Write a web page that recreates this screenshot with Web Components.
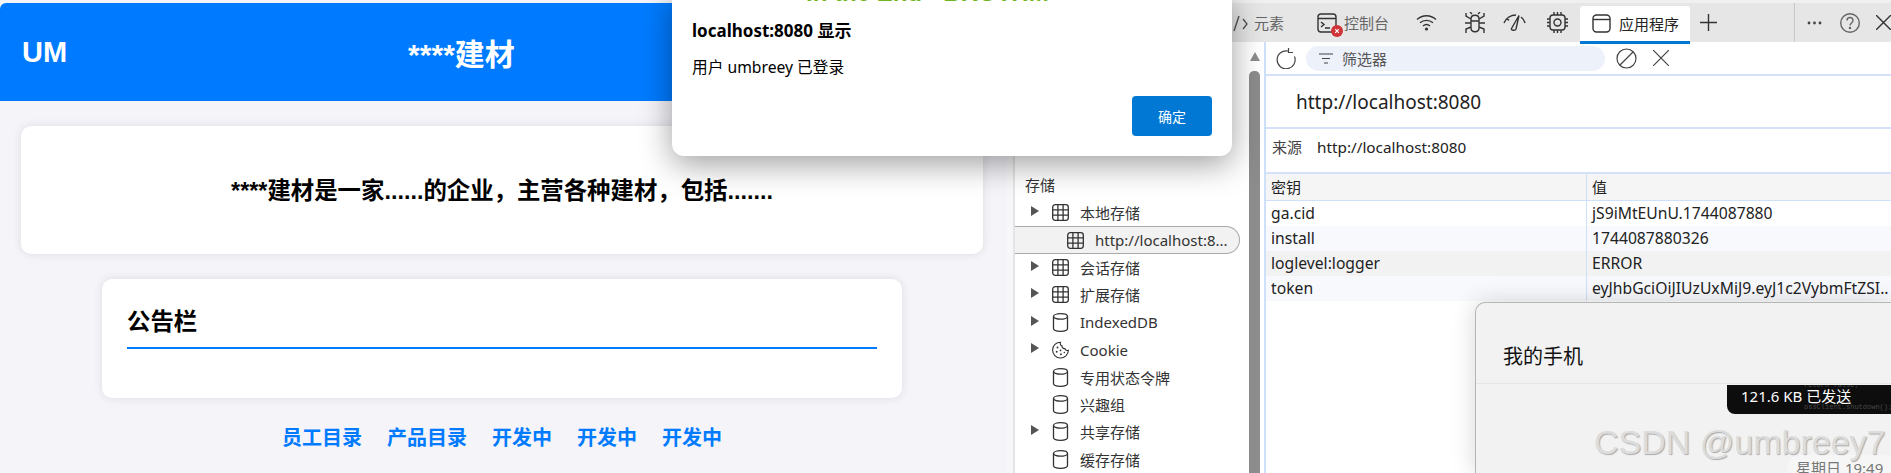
<!DOCTYPE html>
<html lang="zh">
<head>
<meta charset="utf-8">
<title>umbreey</title>
<style>
	html, body { margin: 0; height: 100%; overflow: hidden; background: #fff; }
	body { font-family: "Noto Sans", "Noto Sans CJK SC", sans-serif; }
</style>
</head>
<body>
<app-root></app-root>
<script>
const CJK = '"Noto Sans", "Noto Sans CJK SC", sans-serif';
const ICONS = {
	grid: { w: 17, h: 17, d: '<rect x=".7" y=".7" width="15.600" height="15.600" rx="2.500"/><path d="M.7 5.900h15.600M.7 11.100h15.600M5.900 .7v15.600M11.100 .7v15.600"/>' },
	db: { w: 17, h: 19, d: '<ellipse cx="8.500" cy="3.400" rx="7" ry="2.700"/><path d="M1.500 3.400v12.200c0 1.500 3.100 2.700 7 2.700s7-1.200 7-2.700V3.400"/>' },
	cookie: { w: 20, h: 20, d: '<path d="M10 .8a9.300 9.300 0 1 0 9.300 9.600c-1.900.6-3.600-.3-4.100-2.100-2 .3-3.500-1-3.400-3.100C10.300 5.200 9.300 2.800 10 .8z"/><g fill="#333" stroke="none"><circle cx="6.500" cy="7" r="1.100"/><circle cx="5.500" cy="12" r="1.100"/><circle cx="10" cy="10.500" r="1"/><circle cx="10.500" cy="15" r="1.100"/><circle cx="14.500" cy="13" r=".9"/></g>' }
};

class DtIcon extends HTMLElement {
	connectedCallback() {
		const icon = ICONS[this.getAttribute("name")];
		this.attachShadow({ mode: "open" });
		this.shadowRoot.innerHTML = `
			<style>
				:host { display: inline-flex; flex: none; }
				svg { fill: none; stroke: #333; stroke-width: 1.300; display: block; }
			</style>
			<svg width="${icon.w}" height="${icon.h}" viewBox="0 0 ${icon.w} ${icon.h}">${icon.d}</svg>`;
	}
}
customElements.define("dt-icon", DtIcon);

class ShopPage extends HTMLElement {
	constructor() {
		super();
		this.attachShadow({ mode: "open" });
		this.shadowRoot.innerHTML = `
			<style>
				:host {
					display: block;
					width: 1007px;
					height: 473px;
					box-sizing: border-box;
					padding: 3px 3px 0 0;
					background: #f4f4f9;
					font-family: "Liberation Sans", "Noto Sans CJK SC", sans-serif;
					color: #000;
				}
				header {
					height: 98px;
					background: #007bff;
					color: #fff;
					font-weight: bold;
					display: flex;
					align-items: center;
					padding: 0 22px;
					border-radius: 6px 0 0 0;
					margin-right: -3px;
				}
				.logo { font-size: 29px; }
				.title { font-size: 30px; margin-left: 341px; }
				.intro {
					margin: 25px 21px 0;
					height: 128px;
					padding-bottom: 2px;
					box-sizing: border-box;
					background: #fff;
					border-radius: 10px;
					box-shadow: 0 0 10px rgba(0,0,0,.1);
					display: flex;
					align-items: center;
					justify-content: center;
					font-size: 23.400px;
					font-weight: bold;
				}
				.notice {
					margin: 25px 102px 0 102px;
					height: 119px;
					box-sizing: border-box;
					padding: 24px 25px 0;
					background: #fff;
					border-radius: 10px;
					box-shadow: 0 0 10px rgba(0,0,0,.1);
				}
				.notice h2 {
					margin: 0;
					font-size: 23.400px;
					line-height: 38px;
					padding-bottom: 6px;
					border-bottom: 2px solid #007bff;
				}
				nav {
					margin-top: 24px;
					display: flex;
					justify-content: center;
					gap: 25px;
					font-size: 20px;
					font-weight: bold;
					color: #007bff;
				}
			</style>
			<header><span class="logo">UM</span><span class="title">****建材</span></header>
			<div class="intro">****建材是一家......的企业，主营各种建材，包括.......</div>
			<div class="notice"><h2>公告栏</h2></div>
			<nav><span>员工目录</span><span>产品目录</span><span>开发中</span><span>开发中</span><span>开发中</span></nav>`;
	}
}
customElements.define("shop-page", ShopPage);

class TreeRow extends HTMLElement {
	connectedCallback() {
		const arrow = this.hasAttribute("arrow");
		const sel = this.hasAttribute("selected");
		const icon = this.getAttribute("icon");
		this.attachShadow({ mode: "open" });
		this.shadowRoot.innerHTML = `
			<style>
				:host {
					display: flex;
					align-items: center;
					height: 27.400px;
					box-sizing: border-box;
					font-size: 15px;
					color: #333;
					white-space: nowrap;
					padding-left: ${sel ? 52 : 16}px;
					width: 225px;
				}
				:host([selected]) {
					background: #f2f2f2;
					border: 1px solid #a8a8a8;
					border-left: 0;
					border-radius: 0 14px 14px 0;
				}
				.arrow { width: 0; height: 0; border-left: 8px solid #555; border-top: 5px solid transparent; border-bottom: 5px solid transparent; flex: none; margin-top: -3px; }
				.none { width: 8px; flex: none; }
				.gap { width: 13px; flex: none; }
				.text { margin-left: 11px; }
				dt-icon { width: 17px; justify-content: center; }
			</style>
			${sel ? "" : (arrow ? '<span class="arrow"></span>' : '<span class="none"></span>')}
			${sel ? "" : '<span class="gap"></span>'}
			<dt-icon name="${icon}"></dt-icon>
			<span class="text"><slot></slot></span>`;
	}
}
customElements.define("tree-row", TreeRow);

class StorageTree extends HTMLElement {
	constructor() {
		super();
		this.attachShadow({ mode: "open" });
		this.shadowRoot.innerHTML = `
			<style>
				:host {
					display: flex;
					flex-direction: column;
					width: 234px;
					padding-top: 131px;
					box-sizing: border-box;
					background: #fff;
				}
				.label { font-size: 15px; color: #333; padding-left: 10px; line-height: 24px; height: 26px; }
			</style>
			<div class="label">存储</div>
			<slot></slot>`;
	}
}
customElements.define("storage-tree", StorageTree);

class DtScrollbar extends HTMLElement {
	constructor() {
		super();
		this.attachShadow({ mode: "open" });
		this.shadowRoot.innerHTML = `
			<style>
				:host { display: flex; flex-direction: column; align-items: center; width: 11px; padding-top: 10px; box-sizing: border-box; }
				.up { width: 0; height: 0; border-left: 5.500px solid transparent; border-right: 5.500px solid transparent; border-bottom: 9px solid #8c8c8c; }
				.thumb { flex: 1; width: 11px; margin-top: 10px; background: #8c8c8c; border-radius: 5px 5px 0 0; }
			</style>
			<div class="up"></div><div class="thumb"></div>`;
	}
}
customElements.define("dt-scrollbar", DtScrollbar);

class DtTabs extends HTMLElement {
	constructor() {
		super();
		this.attachShadow({ mode: "open" });
		this.shadowRoot.innerHTML = `
			<style>
				:host {
					display: block;
					height: 42px;
					box-sizing: border-box;
					border-top: 3px solid #f0f0f0;
					background: #e6e6e6;
					font-size: 15px;
					color: #666;
				}
				.bar { display: flex; align-items: center; height: 39px; position: relative; }
				.item { display: flex; align-items: center; flex: none; white-space: nowrap; }
				svg { display: block; fill: none; stroke: #333; stroke-width: 1.400; flex: none; }
				.active {
					background: #fff;
					color: #222;
					height: 38px;
					align-self: flex-start;
					box-sizing: border-box;
					border-bottom: 3px solid #0078d4;
					border-radius: 3px 3px 0 0;
					margin-top: 3px;
				}
			</style>
			<div class="bar">
				<span class="item" style="margin-left:218px;width:15px">
					<svg width="15" height="20" viewBox="0 0 15 20" style="stroke:#555"><path d="M6 3L1 18M10 6l4 5-4 5"/></svg>
				</span>
				<span class="item" style="margin-left:6px">元素</span>
				<span class="item" style="margin-left:33px;position:relative">
					<svg width="20" height="20" viewBox="0 0 20 20"><rect x="1" y="1" width="18" height="18" rx="3"/><path d="M1 5.500h18M4 9l3 2.500L4 14M8 15h5"/></svg>
					<svg width="12" height="12" viewBox="0 0 12 12" style="position:absolute;left:14px;top:12px;stroke:none"><circle cx="6" cy="6" r="6" fill="#d13438"/><path d="M4.200 4.200l3.600 3.600M7.800 4.200L4.200 7.800" stroke="#fff" stroke-width="1.200"/></svg>
				</span>
				<span class="item" style="margin-left:7px">控制台</span>
				<span class="item" style="margin-left:27px">
					<svg width="21" height="17" viewBox="0 0 21 17"><path d="M1 5.500C6.500 .5 14.500 .5 20 5.500M4 8.800c3.800-3.300 9.200-3.300 13 0M7 12c2.100-1.800 4.900-1.800 7 0"/><circle cx="10.500" cy="15" r="1.600" fill="#333" stroke="none"/></svg>
				</span>
				<span class="item" style="margin-left:27px">
					<svg width="22" height="21" viewBox="0 0 22 21"><path d="M7 7c0-5 8-5 8 0v9c0 5-8 5-8 0zM7 9h8M8 2L6 0M14 2l2-2M7 7L2 4V1M15 7l5-3V1M7 11H1M15 11h6M7 15l-5 2v4M15 15l5 2v4"/></svg>
				</span>
				<span class="item" style="margin-left:17px">
					<svg width="23" height="17" viewBox="0 0 23 17"><path d="M1 9C3 4 8 1 13 1M4 4.500l2 2M18 3c2 1.500 3.500 4 4 6M8.500 14.500L16 1.500 13 15c-.8 2-5.300 1.500-4.500-.5z"/></svg>
				</span>
				<span class="item" style="margin-left:21px">
					<svg width="21" height="21" viewBox="0 0 21 21"><rect x="3" y="3" width="15" height="15" rx="3"/><circle cx="10.500" cy="10.500" r="3.500"/><path d="M7 0v3M10.500 0v3M14 0v3M7 18v3M10.500 18v3M14 18v3M0 7h3M0 10.500h3M0 14h3M18 7h3M18 10.500h3M18 14h3"/></svg>
				</span>
				<span class="item active" style="margin-left:12px;width:110px;padding-left:12px">
					<svg width="19" height="19" viewBox="0 0 19 19"><rect x="1" y="1" width="17" height="17" rx="3.500"/><path d="M1 5.500h17"/></svg>
					<span style="margin-left:8px">应用程序</span>
				</span>
				<span class="item" style="margin-left:10px">
					<svg width="17" height="17" viewBox="0 0 17 17"><path d="M8.500 0v17M0 8.500h17"/></svg>
				</span>
				<span class="item" style="margin-left:77px;width:1px;height:39px;background:#c8c8c8"></span>
				<span class="item" style="margin-left:12px">
					<svg width="15" height="4" viewBox="0 0 15 4" style="stroke:none;fill:#444"><circle cx="2" cy="2" r="1.400"/><circle cx="7.500" cy="2" r="1.400"/><circle cx="13" cy="2" r="1.400"/></svg>
				</span>
				<span class="item" style="margin-left:18px">
					<svg width="20" height="20" viewBox="0 0 20 20" style="stroke:#666"><circle cx="10" cy="10" r="9.300"/><path d="M7 7.500c0-4 6-4 6 0 0 2.500-3 2.500-3 5"/><circle cx="10" cy="15" r=".6"/></svg>
				</span>
				<span class="item" style="margin-left:16px">
					<svg width="15" height="15" viewBox="0 0 15 15"><path d="M0 0l15 15M15 0L0 15"/></svg>
				</span>
			</div>`;
	}
}
customElements.define("dt-tabs", DtTabs);

class StorageView extends HTMLElement {
	constructor() {
		super();
		this.attachShadow({ mode: "open" });
		this.shadowRoot.innerHTML = `
			<style>
				:host {
					display: block;
					flex: 1;
					min-width: 0;
					border-left: 2px solid #cfe0fa;
					font-size: 15px;
					color: #222;
					background: #fff;
				}
				.tools { height: 32px; display: flex; align-items: center; border-bottom: 2px solid #d3e2fa; }
				svg { display: block; fill: none; stroke: #444; stroke-width: 1.200; flex: none; }
				.pill {
					width: 299px;
					height: 25px;
					margin-left: 10px;
					background: #edf1fa;
					border-radius: 13px;
					display: flex;
					align-items: center;
					color: #555;
					box-sizing: border-box;
					padding-left: 13px;
				}
				.pill span { margin-left: 9px; }
				.origin { height: 53px; display: flex; align-items: center; padding-left: 30px; box-sizing: border-box; font-size: 19px; border-bottom: 2px solid #d3e2fa; }
				.src { height: 45px; display: flex; align-items: center; padding: 0 0 8px 6px; box-sizing: border-box; border-bottom: 2px solid #d3e2fa; font-size: 15.300px; }
				.src b { font-weight: normal; font-size: 15px; color: #444; margin-right: 15px; }
				.grid { display: grid; grid-template-columns: 320px 1fr; font-size: 15.700px; }
				.c { height: 25px; line-height: 25px; padding-left: 5px; white-space: nowrap; overflow: hidden; }
				.c:nth-child(even) { border-left: 1px solid #cfe0fa; }
				.h { height: 26px; line-height: 27px; background: #f5f5f5; border-bottom: 1px solid #cfe0fa; font-size: 15px; }
				.alt { background: #f7f9fd; }
				.cur { background: #f2f2f2; }
			</style>
			<div class="tools">
				<svg style="margin-left:8px" width="22" height="21" viewBox="0 0 22 21"><path d="M14 3a9 9 0 1 0 6.500 5.500M14.500 0v4.500H19"/></svg>
				<div class="pill">
					<svg width="14" height="11" viewBox="0 0 14 11"><path d="M0 1h14M3 5.500h8M5 10h4"/></svg>
					<span>筛选器</span>
				</div>
				<svg style="margin-left:11px" width="21" height="21" viewBox="0 0 21 21"><circle cx="10.500" cy="10.500" r="9.500"/><path d="M4 17L17 4"/></svg>
				<svg style="margin-left:16px" width="16" height="16" viewBox="0 0 16 16"><path d="M0 0l16 16M16 0L0 16"/></svg>
			</div>
			<div class="origin">http://localhost:8080</div>
			<div class="src"><b>来源</b><span>http://localhost:8080</span></div>
			<div class="grid">
				<div class="c h">密钥</div><div class="c h">值</div>
				<div class="c">ga.cid</div><div class="c">jS9iMtEUnU.1744087880</div>
				<div class="c alt">install</div><div class="c alt">1744087880326</div>
				<div class="c cur">loglevel:logger</div><div class="c cur">ERROR</div>
				<div class="c alt">token</div><div class="c alt">eyJhbGciOiJIUzUxMiJ9.eyJ1c2VybmFtZSI..</div>
			</div>`;
	}
}
customElements.define("storage-view", StorageView);

class AlertDialog extends HTMLElement {
	constructor() {
		super();
		this.attachShadow({ mode: "open" });
		this.shadowRoot.innerHTML = `
			<style>
				:host {
					position: absolute;
					left: 672px;
					top: -10px;
					width: 560px;
					height: 166px;
					box-sizing: border-box;
					background: #fff;
					border-radius: 12px;
					box-shadow: 0 8px 32px rgba(0,0,0,.38);
					padding: 20px 20px 0;
					color: #000;
					display: flex;
					flex-direction: column;
				}
				.t { margin-top: 9px; font-size: 17px; font-weight: bold; line-height: 24px; }
				.m { margin-top: 13px; font-size: 15.700px; line-height: 22px; }
				button {
					align-self: flex-end;
					margin-top: 18px;
					width: 80px;
					height: 40px;
					border: 0;
					border-radius: 4px;
					background: #0078d4;
					color: #fff;
					font: 14px ${CJK};
				}
			</style>
			<div class="t">localhost:8080 显示</div>
			<div class="m">用户 umbreey 已登录</div>
			<button>确定</button>`;
	}
}
customElements.define("alert-dialog", AlertDialog);

class PhoneWindow extends HTMLElement {
	constructor() {
		super();
		this.attachShadow({ mode: "open" });
		this.shadowRoot.innerHTML = `
			<style>
				:host {
					position: absolute;
					left: 1475px;
					top: 302px;
					width: 416px;
					height: 171px;
					box-sizing: border-box;
					background: #f2f2f2;
					border: 1px solid #b5b5b5;
					border-width: 1px 0 0 1px;
					border-radius: 10px 0 0 0;
					box-shadow: 0 0 24px rgba(0,0,0,.16);
					overflow: hidden;
				}
				.head { height: 81px; box-sizing: border-box; padding-left: 27px; font-size: 20px; line-height: 107px; color: #111; border-bottom: 1px solid #e5e5e5; }
				.msg {
					position: absolute;
					left: 251px;
					top: 82px;
					width: 165px;
					height: 29px;
					background: #0d0d0d;
					border-radius: 0 0 0 8px;
					color: #fff;
					font-size: 15px;
					line-height: 22px;
					padding-left: 14px;
					box-sizing: border-box;
					white-space: nowrap;
					overflow: hidden;
				}
				.code { position: absolute; left: 77px; font: 7px/8px "Liberation Mono", monospace; color: #4a4a4a; }
				.mark {
					position: absolute;
					left: 118px;
					top: 119px;
					font: 34px/40px "Liberation Sans", sans-serif;
					color: #dcdcdc;
					text-shadow: 1px 1px 1px #aaa;
					white-space: nowrap;
				}
				.time {
					position: absolute;
					left: 311px;
					top: 152px;
					width: 110px;
					height: 40px;
					background: #f6f6f6;
					border-radius: 14px;
					box-sizing: border-box;
					padding-left: 9px;
					color: #777;
					font-size: 15px;
					line-height: 26px;
					white-space: nowrap;
				}
			</style>
			<div class="head">我的手机</div>
			<div class="msg">121.6 KB 已发送<span class="code" style="top:-4px">return false;</span><span class="code" style="top:18px">ossClient.shutdown();</span></div>
			<div class="time">星期日 19:49</div>
			<div class="mark">CSDN @umbreey7</div>`;
	}
}
customElements.define("phone-window", PhoneWindow);

class AppRoot extends HTMLElement {
	constructor() {
		super();
		this.attachShadow({ mode: "open" });
		this.shadowRoot.innerHTML = `
			<style>
				:host {
					display: grid;
					grid-template-columns: 1015px 1fr;
					width: 1891px;
					height: 473px;
					position: relative;
					overflow: hidden;
					font-family: ${CJK};
				}
				.left { background: #f7f7f8; border-right: 2px solid #e4e4e8; box-sizing: border-box; }
				.right { display: flex; flex-direction: column; min-width: 0; }
				.body { flex: 1; display: flex; min-height: 0; }
				dt-scrollbar { margin-right: 4px; }
				.song {
					position: absolute;
					left: 806px;
					top: -17px;
					font: bold 24px/20px "Liberation Sans", sans-serif;
					color: #6fb51e;
					white-space: nowrap;
				}
			</style>
			<div class="left"><shop-page></shop-page></div>
			<div class="right">
				<dt-tabs></dt-tabs>
				<div class="body">
					<storage-tree>
						<tree-row arrow icon="grid">本地存储</tree-row>
						<tree-row selected icon="grid">http://localhost:8...</tree-row>
						<tree-row arrow icon="grid">会话存储</tree-row>
						<tree-row arrow icon="grid">扩展存储</tree-row>
						<tree-row arrow icon="db">IndexedDB</tree-row>
						<tree-row arrow icon="cookie">Cookie</tree-row>
						<tree-row icon="db">专用状态令牌</tree-row>
						<tree-row icon="db">兴趣组</tree-row>
						<tree-row arrow icon="db">共享存储</tree-row>
						<tree-row icon="db">缓存存储</tree-row>
					</storage-tree>
					<dt-scrollbar></dt-scrollbar>
					<storage-view></storage-view>
				</div>
			</div>
			<alert-dialog></alert-dialog>
			<div class="song">In the End - BROTHM</div>
			<phone-window></phone-window>`;
	}
}
customElements.define("app-root", AppRoot);
</script>
</body>
</html>
